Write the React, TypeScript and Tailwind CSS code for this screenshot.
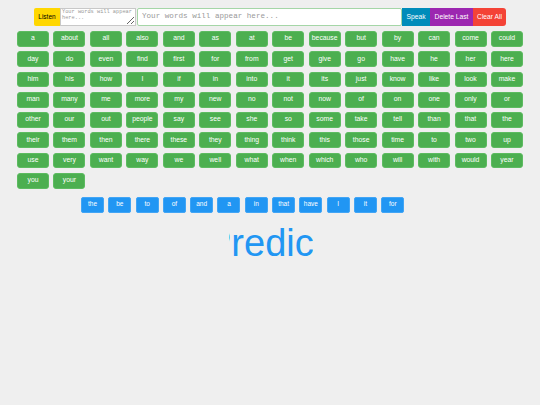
import React, { useState } from 'react';

const WORDS = [
  'a', 'about', 'all', 'also', 'and', 'as', 'at', 'be', 'because', 'but', 'by', 'can', 'come', 'could',
  'day', 'do', 'even', 'find', 'first', 'for', 'from', 'get', 'give', 'go', 'have', 'he', 'her', 'here',
  'him', 'his', 'how', 'I', 'if', 'in', 'into', 'it', 'its', 'just', 'know', 'like', 'look', 'make',
  'man', 'many', 'me', 'more', 'my', 'new', 'no', 'not', 'now', 'of', 'on', 'one', 'only', 'or',
  'other', 'our', 'out', 'people', 'say', 'see', 'she', 'so', 'some', 'take', 'tell', 'than', 'that', 'the',
  'their', 'them', 'then', 'there', 'these', 'they', 'thing', 'think', 'this', 'those', 'time', 'to', 'two', 'up',
  'use', 'very', 'want', 'way', 'we', 'well', 'what', 'when', 'which', 'who', 'will', 'with', 'would', 'year',
  'you', 'your',
];

const SUGGESTIONS = ['the', 'be', 'to', 'of', 'and', 'a', 'in', 'that', 'have', 'I', 'it', 'for'];

export default function App() {
  const [text, setText] = useState('');

  const addWord = (w: string) => setText(t => (t ? t + ' ' + w : w));
  const deleteLast = () => setText(t => t.split(' ').slice(0, -1).join(' '));

  return (
    <div className="min-h-[405px] bg-[#efefef] font-['Liberation_Sans',Arial,sans-serif] pt-[8px]">
      {/* top bar */}
      <div className="flex justify-center h-[18px]">
        <button className="w-[26px] bg-[#ffd700] text-black text-[6.5px] rounded-l-[2px]">Listen</button>
        <textarea
          readOnly
          value=""
          placeholder="Your words will appear here..."
          className="w-[76px] bg-white border border-[#c8c8c8] text-[5.3px] leading-[5.5px] font-['Liberation_Mono',monospace] px-[1px] pt-[1px] placeholder:text-[#999] outline-none"
        />
        <input
          readOnly
          value={text}
          placeholder="Your words will appear here..."
          className="ml-[1px] w-[265px] bg-white border border-[#a5d6a7] rounded-[2px] text-[7.6px] font-['Liberation_Mono',monospace] px-[4px] placeholder:text-[#999] outline-none"
        />
        <button className="w-[28px] bg-[#008cba] text-white text-[6.7px]">Speak</button>
        <button onClick={deleteLast} className="w-[43px] bg-[#9c27b0] text-white text-[6.7px]">Delete Last</button>
        <button onClick={() => setText('')} className="w-[33px] bg-[#f44336] text-white text-[6.7px] rounded-r-[3px]">Clear All</button>
      </div>

      {/* word grid */}
      <div className="w-[506px] mx-auto mt-[5px] grid grid-cols-[repeat(14,1fr)] gap-x-[4.45px] gap-y-[4.5px]">
        {WORDS.map(w => (
          <button
            key={w}
            onClick={() => addWord(w)}
            className="h-[15.75px] bg-[#4caf50] border border-[#5dbb61] rounded-[3px] text-white text-[6.8px] leading-none"
          >
            {w}
          </button>
        ))}
      </div>

      {/* suggestions */}
      <div className="flex gap-[4.3px] pl-[81px] mt-[8px]">
        {SUGGESTIONS.map(w => (
          <button
            key={w}
            onClick={() => addWord(w)}
            className="w-[23px] h-[16px] bg-[#2196f3] border border-[#42a5f5] rounded-[2px] text-white text-[6.5px] leading-none"
          >
            {w}
          </button>
        ))}
      </div>

      {/* prediction banner */}
      <div className="flex justify-center mt-[9px]">
        <div className="ml-[2px] w-[84px] overflow-hidden">
          <div className="ml-[-23px] text-[38px] leading-[42px] text-[#2196f3] whitespace-nowrap">Predic</div>
        </div>
      </div>
    </div>
  );
}
